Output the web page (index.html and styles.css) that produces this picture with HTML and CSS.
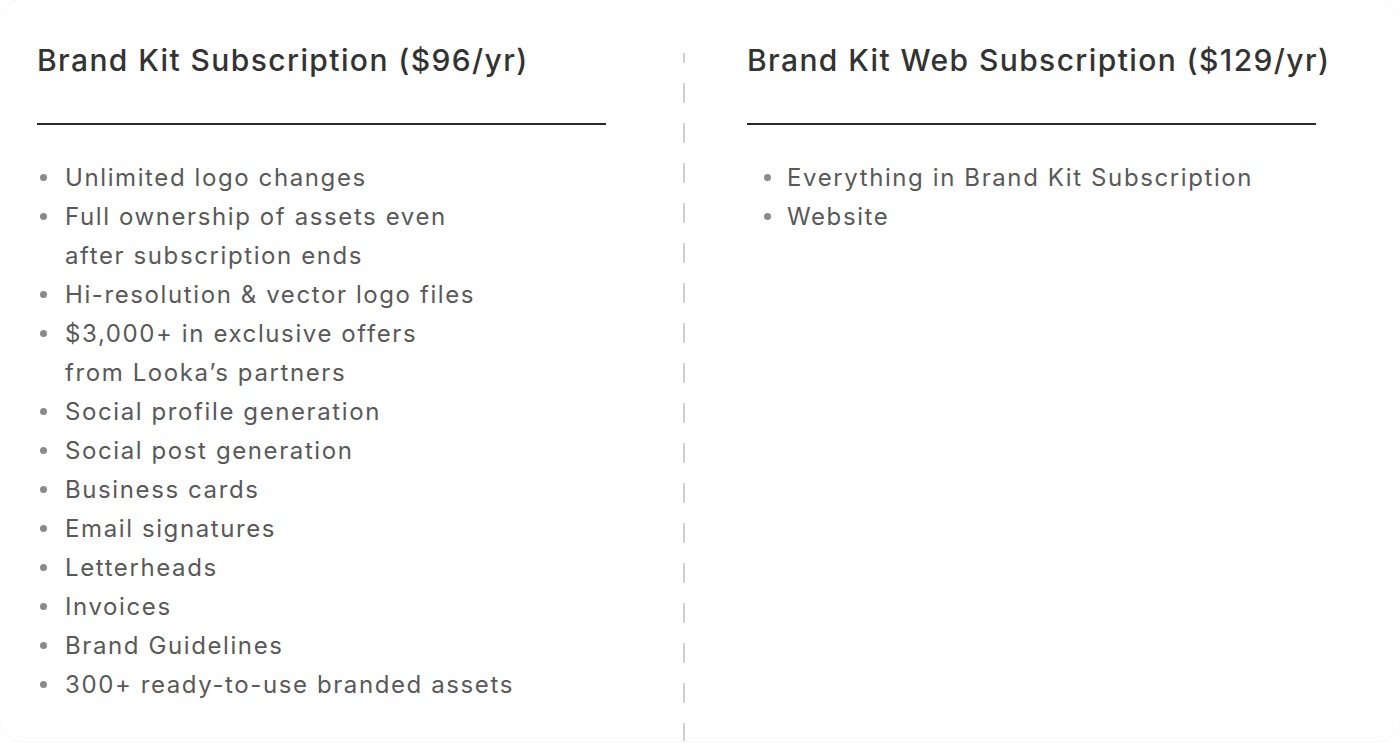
FILE: index.html
```html
<!DOCTYPE html>
<html lang="en">
<head>
<meta charset="utf-8">
<title>Brand Kit Plans</title>
<link rel="stylesheet" href="styles.css">
</head>
<body>
<div class="card">
  <section class="plan plan-left">
    <h2 class="plan-title">Brand Kit Subscription ($96/yr)</h2>
    <hr class="plan-rule">
    <ul class="features">
      <li>Unlimited logo changes</li>
      <li>Full ownership of assets even<br>after subscription ends</li>
      <li>Hi-resolution &amp; vector logo files</li>
      <li>$3,000+ in exclusive offers<br>from Looka’s partners</li>
      <li>Social profile generation</li>
      <li>Social post generation</li>
      <li>Business cards</li>
      <li>Email signatures</li>
      <li>Letterheads</li>
      <li>Invoices</li>
      <li>Brand Guidelines</li>
      <li>300+ ready-to-use branded assets</li>
    </ul>
  </section>
  <div class="divider"></div>
  <section class="plan plan-right">
    <h2 class="plan-title">Brand Kit Web Subscription ($129/yr)</h2>
    <hr class="plan-rule">
    <ul class="features features-right">
      <li>Everything in Brand Kit Subscription</li>
      <li>Website</li>
    </ul>
  </section>
</div>
</body>
</html>
```

FILE: styles.css
```css
* { box-sizing: border-box; }
html, body {
  margin: 0;
  padding: 0;
  background: #ffffff;
}
body {
  font-family: Inter, "Noto Sans", "Liberation Sans", sans-serif;
  width: 1400px;
  height: 743px;
  overflow: hidden;
}
.card {
  display: grid;
  grid-template-columns: 683px 2px 1fr;
  height: 743px;
  border: 1px solid #f8f8f8;
  border-radius: 24px;
  margin: -1px;
}
.plan {
  padding-top: 42px;
}
.plan-left {
  padding-left: 37px;
  padding-right: 77px;
}
.plan-right {
  padding-left: 62px;
}
.plan-title {
  margin: 0;
  font-size: 30px;
  line-height: 36px;
  font-weight: 500;
  color: #333333;
  white-space: nowrap;
  letter-spacing: 1.4px;
}
.plan-rule {
  margin: 45px 0 0 0;
  width: 569px;
  height: 2px;
  border: 0;
  background: #2a2a2a;
}
.features {
  margin: 33px 0 0 0;
  padding: 0 0 0 28px;
  list-style: none;
}
.features-right {
  padding-left: 40px;
}
.features li {
  position: relative;
  font-size: 24px;
  line-height: 39px;
  color: #595959;
  letter-spacing: 1.6px;
}
.features li::before {
  content: "";
  position: absolute;
  left: -25px;
  top: 16px;
  width: 7px;
  height: 7px;
  border-radius: 50%;
  background: #8a8a8a;
}
.features-right li::before {
  left: -23px;
}
.divider {
  margin-top: 53px;
  background-image: repeating-linear-gradient(to bottom, #cfcfcf 0 20px, transparent 20px 40px);
  background-position: 0 -10px;
}
```
